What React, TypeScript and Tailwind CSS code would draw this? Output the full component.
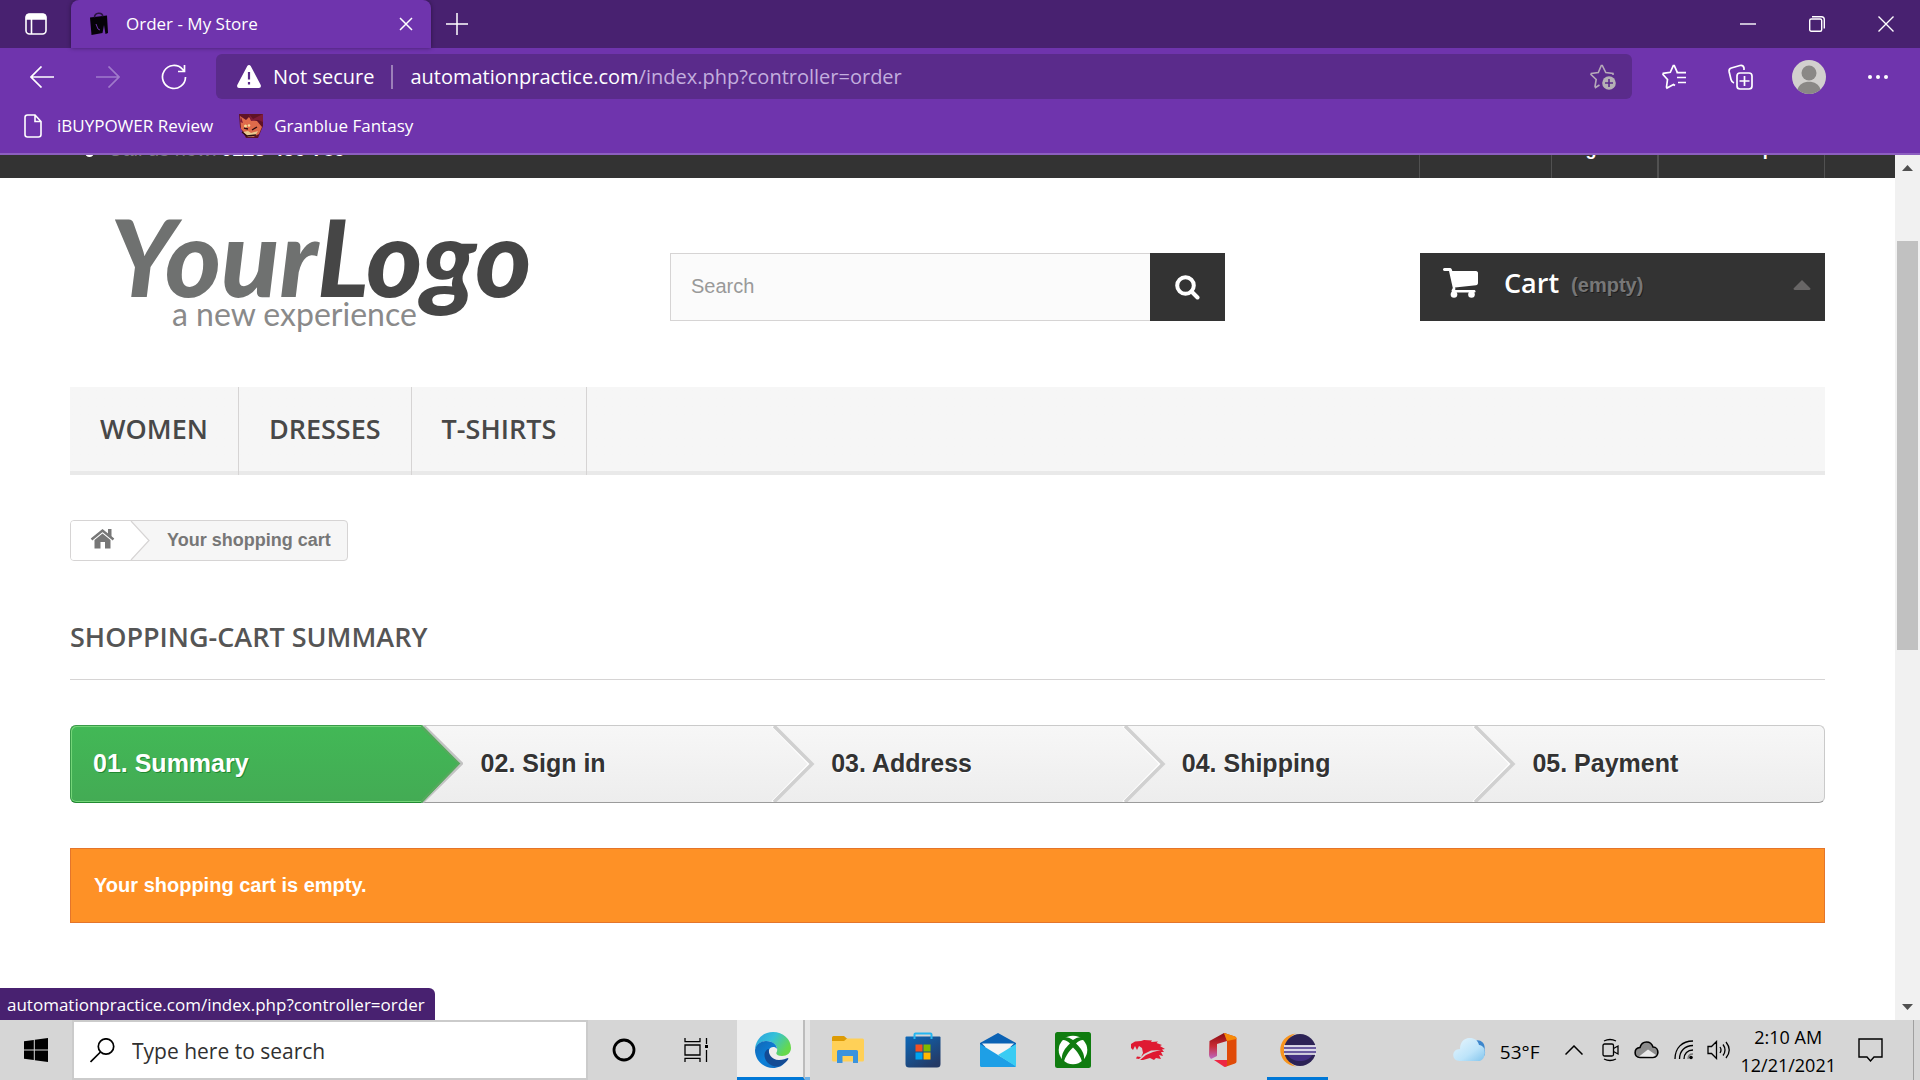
import type { ReactNode } from "react";

const ui = "font-['Open_Sans','Noto_Sans',sans-serif]";

function TitleBar() {
  return (
    <div className="flex h-12 items-stretch bg-[#482170] text-white">
      <button aria-label="Tab actions" className="flex w-[71px] items-center justify-center">
        <svg width="22" height="22" viewBox="0 0 22 22" fill="none" stroke="white" strokeWidth="1.6">
          <rect x="1" y="1" width="20" height="20" rx="3.5" />
          <path d="M1.5 3.5C1.5 2 2 1.500 3.500 1.500H18.500C20 1.500 20.500 2 20.500 3.500V6H1.500Z" fill="white" />
          <path d="M6.500 6V21" />
        </svg>
      </button>
      <div className="flex w-[360px] items-center rounded-t-lg bg-[#6f34ad] pr-[18px] pl-[19px] shadow-[0_0_4px_rgba(0,0,0,0.4)]">
        <svg width="18" height="24" viewBox="0 0 18 24" className="mr-[18px]">
          <path d="M0 5.500L17 3.500L18 21L15.500 22L14 13L12.500 21L1.500 23Z" fill="#050208" />
          <path d="M4.500 5.500C4.500 0 12.500 0 12.800 4.500" fill="none" stroke="#2a1440" strokeWidth="1.600" />
          <path d="M6 12L8 17L10 18" fill="none" stroke="#6f34ad" strokeWidth="1" />
        </svg>
        <span className="flex-1 text-[17px]">Order - My Store</span>
        <button aria-label="Close tab">
          <svg width="14" height="14" viewBox="0 0 14 14" stroke="white" strokeWidth="1.500"><path d="M1 1L13 13M13 1L1 13" /></svg>
        </button>
      </div>
      <button aria-label="New tab" className="flex w-[52px] items-center justify-center">
        <svg width="22" height="22" viewBox="0 0 22 22" stroke="white" strokeWidth="1.500"><path d="M11 0V22M0 11H22" /></svg>
      </button>
      <div className="flex-1" />
      <button aria-label="Minimize" className="flex w-[69px] items-center justify-center">
        <svg width="16" height="16" viewBox="0 0 16 16" stroke="white" strokeWidth="1.400"><path d="M0 8H16" /></svg>
      </button>
      <button aria-label="Restore" className="flex w-[69px] items-center justify-center">
        <svg width="16" height="16" viewBox="0 0 16 16" fill="none" stroke="white" strokeWidth="1.400">
          <rect x="0.700" y="3" width="12" height="12.300" rx="1.500" />
          <path d="M3 0.700H12.500C14.500 0.700 15.300 1.500 15.300 3.500V12.500" />
        </svg>
      </button>
      <button aria-label="Close" className="flex w-[69px] items-center justify-center">
        <svg width="16" height="16" viewBox="0 0 16 16" stroke="white" strokeWidth="1.400"><path d="M0.500 0.500L15.500 15.500M15.500 0.500L0.500 15.500" /></svg>
      </button>
    </div>
  );
}

function AddressRow() {
  return (
    <div className="flex h-14 items-center pt-px text-[20px] text-white">
      <button aria-label="Back" className="ml-[30px]">
        <svg width="24" height="22" viewBox="0 0 24 22" fill="none" stroke="white" strokeWidth="1.700"><path d="M24 11H1M11.500 0.500L1 11L11.500 21.500" /></svg>
      </button>
      <button aria-label="Forward" className="ml-[42px]">
        <svg width="24" height="22" viewBox="0 0 24 22" fill="none" stroke="#a07acb" strokeWidth="1.700"><path d="M0 11H23M12.500 0.500L23 11L12.500 21.500" /></svg>
      </button>
      <button aria-label="Reload" className="ml-[41px]">
        <svg width="26" height="26" viewBox="0 0 26 26" fill="none" stroke="white" strokeWidth="1.700">
          <path d="M24.500 13A11.500 11.500 0 1 1 21.500 5.200L23 7M23.500 1V7.500H17" />
        </svg>
      </button>
      <div className="ml-[29px] flex h-[45px] flex-1 items-center rounded-md bg-[#5a2b8b] pr-[16px] pl-[21px]">
        <svg width="24" height="23" viewBox="0 0 24 23">
          <path d="M10.300 1C11 -0.300 13 -0.300 13.700 1L23.600 19.800C24.400 21.300 23.500 23 22 23H2C0.500 23 -0.400 21.300 0.400 19.800Z" fill="white" />
          <path d="M12 7V14.500M12 17V19.500" stroke="#5a2b8b" strokeWidth="2.200" />
        </svg>
        <span className="ml-3">Not secure</span>
        <span className="mx-[17px] h-6 w-0.5 bg-[#9c80b9]" />
        <span className="flex-1 text-[#c3aede]"><span className="text-white">automationpractice.com</span>/index.php?controller=order</span>
        <button aria-label="Add to favorites">
          <svg width="26" height="26" viewBox="0 0 26 26" fill="none" stroke="#b5a9b9" strokeWidth="1.600">
            <path d="M9.500 21L5.500 23.500L5 22.500L6.200 15.500L1 10.500L1.300 9.500L8.300 8.500L11.300 1.500H12.300L15.800 8.500L23 9.500V11" />
            <circle cx="19" cy="19" r="6.800" fill="#b5b1b5" stroke="none" />
            <path d="M19 15V23M15 19H23" stroke="#5a2b8b" />
          </svg>
        </button>
      </div>
      <button aria-label="Favorites" className="ml-[30px]">
        <svg width="24" height="26" viewBox="0 0 24 26" fill="none" stroke="white" strokeWidth="1.700">
          <path d="M13 21.500L11.500 20.500L5 24L4.500 23L5.500 15.500L1 10.500L1.300 9.300L8.300 8.300L11.300 1.700H12.300L15.300 8.300" />
          <path d="M14.500 8.700H24M15 13.500H24M16 18.500H24" />
        </svg>
      </button>
      <button aria-label="Collections" className="ml-[42px]">
        <svg width="25" height="26" viewBox="0 0 25 26" fill="none" stroke="white" strokeWidth="1.700">
          <path d="M6 19C4.500 18.500 3.500 17.500 3 15.500L1.200 8C0.800 6 1.500 4.500 3.300 4L12 1.500C14 1 15.500 2 16 4V6" />
          <rect x="9" y="9" width="15" height="16" rx="3" />
          <path d="M16.500 12V22M11.500 17H21.500" />
        </svg>
      </button>
      <button aria-label="Profile" className="ml-[39px]">
        <svg width="34" height="34" viewBox="0 0 34 34">
          <circle cx="17" cy="17" r="17" fill="#d2d0ce" />
          <circle cx="17" cy="13" r="7.500" fill="#8a8886" />
          <path d="M5.500 29.500C8 19 26 19 28.500 29.500A17 17 0 0 1 5.500 29.500Z" fill="#8a8886" />
        </svg>
      </button>
      <button aria-label="Settings and more" className="mr-[32px] ml-[42px]">
        <svg width="20" height="6" viewBox="0 0 20 6" fill="white"><circle cx="2" cy="3" r="2" /><circle cx="10" cy="3" r="2" /><circle cx="18" cy="3" r="2" /></svg>
      </button>
    </div>
  );
}

function BookmarkBar() {
  return (
    <div className="flex h-[49px] items-center pb-1.5 pl-6 text-[17px] text-white">
      <a href="#ibuypower" className="flex items-center gap-[15px]">
        <svg width="18" height="24" viewBox="0 0 18 24" fill="none" stroke="white" strokeWidth="1.600">
          <path d="M1 3.500C1 2 2 1 3.500 1H11L17 7.500V20.500C17 22 16 23 14.500 23H3.500C2 23 1 22 1 20.500ZM11 1V7.500H17" />
        </svg>
        iBUYPOWER Review
      </a>
      <a href="#granblue" className="ml-[26px] flex items-center gap-[11px]">
        <svg width="24" height="24" viewBox="0 0 24 24">
          <path d="M0 0H24V12L19 24H7L1 13Z" fill="#5f1226" />
          <path d="M1 2L7 6L10 3L12 6L18 7L23 13L20 20L14 23L7 20L2 15Z" fill="#df6b4b" />
          <path d="M10 0L14 5L24 0V8L19 6L12 7ZM2 3L4 9L1 8Z" fill="#7f1b38" />
          <path d="M4 18L9 17L12 19L19 17L16 22L9 23Z" fill="#e8c98e" />
          <path d="M5 14L9 15M13 16L18 13M3 18L8 22L17 21" stroke="#2c0b10" strokeWidth="1.300" fill="none" />
          <circle cx="6.500" cy="12" r="1.500" fill="#f5dc96" />
          <circle cx="10" cy="11.500" r="1.300" fill="#f5dc96" />
        </svg>
        Granblue Fantasy
      </a>
    </div>
  );
}

function UtilityBar() {
  return (
    <div className="flex h-[23px] items-end overflow-hidden bg-[#333] px-[70px] text-[18px] leading-6 text-white">
      <div className="flex flex-1 items-center pb-[17px] pl-[15px] text-[20px] text-[#777]">
        <span className="mr-[14px] h-4 w-[9px] rounded-full bg-white" />
        Call us now:
        <strong className="ml-[4px] text-white">0123-456-789</strong>
      </div>
      <nav className="flex font-bold">
        <a href="#contact" className="w-[132px] border-l border-[#515151] pb-[15px] text-center text-[#202020]">Contact us</a>
        <a href="#signout" className="w-[106px] border-l border-[#515151] pb-[17px] text-center">Sign out</a>
        <a href="#account" className="w-[168px] border-x border-l-2 border-[#515151] pb-[17px] text-center">Test Samples</a>
      </nav>
    </div>
  );
}

function ShopHeader() {
  return (
    <header className="flex h-[209px] items-start pt-[36px]">
      <a href="#home" className="ml-[40px] block w-[430px] font-['Lato',sans-serif]">
        <span className="block text-[107px] leading-[84px] font-black text-[#6f7170] italic">Your<span className="text-[#464646]">Logo</span></span>
        <span className="-mt-[2px] block pl-[62px] text-[32px] leading-9 text-[#8a8a8a]">a new experience</span>
      </a>
      <form className="mt-[39px] ml-[130px] flex h-[68px] w-[555px]">
        <input aria-label="Search" placeholder="Search" className="min-w-0 flex-1 border border-r-0 border-[#d6d4d4] bg-[#fbfbfb] px-5 pb-0.5 text-[20px] outline-none placeholder:text-[#999]" />
        <button type="button" aria-label="Submit search" className="flex w-[75px] items-center justify-center bg-[#333]">
          <svg width="25" height="25" viewBox="0 0 25 25" fill="none" stroke="white" strokeWidth="4"><circle cx="10.500" cy="10.500" r="8.300" /><path d="M16.500 16.500L22.500 22.500" strokeLinecap="round" /></svg>
        </button>
      </form>
      <a href="#cart" className="mt-[39px] ml-auto flex h-[68px] w-[405px] items-center bg-[#333] pr-[14px] pb-2 pl-[23px]">
        <svg width="35" height="30" viewBox="0 0 35 30" fill="white">
          <path d="M1.500 0H7C8.500 0 9 1.500 9.300 3H33C34.300 3 35 4 35 5V15C35 16.200 34.300 17 33 17.200L12 19.500C12.500 20.500 12.500 21.500 12 22H31C33 22 33 24.500 31.500 24.500H10.500C8.800 24.500 8 23 9 21.500L9.800 20L6 3H1.500C-0.500 3 -0.500 0 1.500 0Z" />
          <circle cx="11" cy="26.500" r="3.300" /><circle cx="28.500" cy="26.500" r="3.300" />
        </svg>
        <span className="ml-[26px] font-['Open_Sans',sans-serif] text-[27px] font-semibold text-white">Cart</span>
        <span className="mt-1 ml-3 text-[20px] font-bold text-[#777] [text-shadow:1px_1px_rgba(0,0,0,0.4)]">(empty)</span>
        <svg width="18" height="10" viewBox="0 0 18 10" className="mt-1 ml-auto"><path d="M9 0L17.500 8.500Q17.500 10 16 10H2Q0.500 10 0.500 8.500Z" fill="#686666" /></svg>
      </a>
    </header>
  );
}

function MainMenu() {
  return (
    <nav className="flex h-[88px] bg-linear-to-t from-[#e9e9e9] from-[4px] to-[#f6f6f6] to-[4px] font-['Open_Sans',sans-serif] text-[27px] font-semibold text-[#484848]">
      {["WOMEN", "DRESSES", "T-SHIRTS"].map((t) => (
        <a key={t} href="#category" className="flex items-center border-r border-[#d6d4d4] px-[30px] pb-1">{t}</a>
      ))}
    </nav>
  );
}

function Breadcrumb() {
  return (
    <nav aria-label="Breadcrumb" className="mt-[45px] flex h-[41px] w-fit items-stretch overflow-hidden rounded border border-[#d6d4d4] bg-[#f6f6f6] pr-4 text-[18px] font-bold text-[#777]">
      <a href="#home" aria-label="Home" className="flex">
        <svg width="80" height="39" viewBox="0 0 80 39">
          <path d="M0 0H60L78 19.500L60 39H0Z" fill="white" />
          <path d="M60 0L78 19.500L60 39" fill="none" stroke="#d6d4d4" strokeWidth="1.200" />
          <path d="M20.500 18.500L31.500 9.500L42.500 18.500" fill="none" stroke="#777" strokeWidth="2.400" />
          <path d="M37 8H40.500V16L37 13.500ZM23.500 19L31.500 12.500L39.500 19V27.500H34V21H29.500V27.500H23.500Z" fill="#777" />
        </svg>
      </a>
      <span className="flex items-center pl-4">Your shopping cart</span>
    </nav>
  );
}

function Steps() {
  const steps = ["02. Sign in", "03. Address", "04. Shipping", "05. Payment"];
  return (
    <ol className="mt-[45px] flex h-[78px] rounded-md border border-[#cacaca] border-b-[#9b9b9b] bg-linear-to-b from-[#f7f7f7] to-[#ededed] text-[25px] font-bold text-[#333] [text-shadow:1px_1px_white]">
      <li className="relative -my-px -ml-px flex w-1/5 items-center rounded-l-md border border-r-0 border-[#399b49] border-b-[#208931] bg-linear-to-b from-[#42b856] to-[#43ab54] pl-[22px] text-white shadow-[inset_1px_1px_#74d578,inset_0_-1px_#74d578] [text-shadow:1px_1px_#208931]">
        01. Summary
        <svg width="42" height="78" viewBox="0 0 42 78" className="absolute -top-px left-full">
          <defs><linearGradient id="step" x2="0" y2="1"><stop stopColor="#42b856" /><stop offset="1" stopColor="#43ab54" /></linearGradient></defs>
          <path d="M3 1L41 38.500L2 77" fill="none" stroke="#c2c2c2" strokeWidth="2.500" />
          <path d="M0 0H1L38.500 38.500L1 78H0Z" fill="url(#step)" />
          <path d="M0 1L38 38.500L0 77" fill="none" stroke="#57a95e" strokeWidth="2" />
        </svg>
      </li>
      {steps.map((s, i) => (
        <li key={s} className="relative flex w-1/5 items-center pl-[60px]">
          {s}
          {i < 3 && (
            <svg width="44" height="76" viewBox="0 0 44 76" className="absolute top-0 left-full">
              <path d="M1 0L38 38L1 76" fill="none" stroke="white" strokeWidth="2" />
              <path d="M3 0L41 38L3 76" fill="none" stroke="#d0d0d0" strokeWidth="3.500" />
            </svg>
          )}
        </li>
      ))}
    </ol>
  );
}

function TaskSlot({ label, children }: { label: string; children: ReactNode }) {
  return <button aria-label={label} className="flex h-full w-[75px] items-center justify-center">{children}</button>;
}

function Taskbar() {
  return (
    <footer className="flex h-[60px] items-stretch bg-[#d6d6d6] text-black">
      <button aria-label="Start" className="flex w-[72px] items-center justify-center">
        <svg width="24" height="24" viewBox="0 0 24 24"><path d="M0 3.300L9.800 2V11.400H0ZM10.800 1.800L24 0V11.400H10.800ZM0 12.500H9.800V22L0 20.700ZM10.800 12.500H24V24L10.800 22.200Z" /></svg>
      </button>
      <label className="flex w-[516px] items-center border-2 border-[#cbcbcb] bg-white pl-4">
        <svg width="25" height="25" viewBox="0 0 25 25" fill="none" stroke="black" strokeWidth="1.700"><circle cx="16" cy="8.500" r="7.700" /><path d="M10.500 14L0.500 24" /></svg>
        <input aria-label="Type here to search" placeholder="Type here to search" className="ml-[17px] min-w-0 flex-1 pt-1 text-[21px] outline-none placeholder:text-[#303030]" />
      </label>
      <button aria-label="Cortana" className="flex w-[72px] items-center justify-center">
        <svg width="24" height="24" viewBox="0 0 24 24"><circle cx="12" cy="12" r="10" fill="none" stroke="black" strokeWidth="2.800" /></svg>
      </button>
      <button aria-label="Task view" className="mr-[5px] flex w-[72px] items-center justify-center">
        <svg width="25" height="24" viewBox="0 0 25 24" fill="none" stroke="black" strokeWidth="1.300">
          <path d="M1 0V3.700H16V0M1 24V20.300H16V24M1 7H16V17H1ZM22.500 0V6M22.500 12V24" /><path d="M21 7H24V10H21Z" fill="black" stroke="none" />
        </svg>
      </button>
      <button aria-label="Microsoft Edge" className="flex w-[73px] items-stretch">
        <span className="flex w-[68px] items-center justify-end border-r-2 border-b-[3px] border-[#bcbcbc] border-b-[#0078d7] bg-[#eee] pt-[3px] pr-3">
          <svg width="36" height="36" viewBox="0 0 36 36">
            <defs>
              <linearGradient id="e1" x1="0" x2="1" y2="0.500"><stop stopColor="#2a9fe0" /><stop offset="0.500" stopColor="#35c1d8" /><stop offset="1" stopColor="#66d94a" /></linearGradient>
              <linearGradient id="e2" x2="1" y2="1"><stop stopColor="#1266b5" /><stop offset="0.500" stopColor="#0b80d8" /><stop offset="1" stopColor="#1565b8" /></linearGradient>
            </defs>
            <path d="M0 17C1 7 8 0 18 0C28 0 36 7 36 16C36 21 32 24 27 24C23 24 20.500 22.500 21.500 20.500C24 16 20 9 11 9C6 9 2 12 0 17Z" fill="url(#e1)" />
            <path d="M0 18C1 12 6 9 11 9C18 9 22 13 22 17C20 14 15 14.500 14 18C12 25 19 31 27 30L31 29C28 34 23 36 18 36C8 36 0 28 0 18Z" fill="url(#e2)" />
            <path d="M14 17C13 21 16 28 24 28C28 28 31 26.500 33 26C35 26.500 29 33 23 34.500C15 35 9 29 9.500 22C10 19 12 17 14 17Z" fill="#134b94" />
          </svg>
        </span>
        <span className="w-[5px] border-b-[3px] border-[#6cb0e6] bg-[#e6e6e6]" />
      </button>
      <TaskSlot label="File Explorer">
        <svg width="32" height="28" viewBox="0 0 32 28">
          <path d="M0 1.500Q0 0 1.500 0H12L15.500 3H0Z M0 3H15V6H0Z" fill="#dd9b05" />
          <path d="M0 5H12L15 2.500H30.500Q32 2.500 32 4V24Q32 25.500 30.500 25.500H1.500Q0 25.500 0 24Z" fill="#ffd057" />
          <path d="M5 27V15.500Q5 14 6.500 14H24.500Q26 14 26 15.500V27H21V20H10.500V27Z" fill="#3a93dd" />
        </svg>
      </TaskSlot>
      <TaskSlot label="Microsoft Store">
        <svg width="36" height="36" viewBox="0 0 36 36">
          <defs><linearGradient id="st" x2="0.700" y2="1"><stop stopColor="#0d68b8" /><stop offset="1" stopColor="#243a66" /></linearGradient></defs>
          <path d="M0.500 5.500Q0.500 4.500 1.500 4.500H34.500Q35.500 4.500 35.500 5.500V32Q35.500 35.500 32 35.500H4Q0.500 35.500 0.500 32Z" fill="url(#st)" />
          <path d="M9.500 7V2.500Q9.500 1.500 10.500 1.500H25.500Q26.500 1.500 26.500 2.500V7" fill="none" stroke="#25b6f0" strokeWidth="2" />
          <path d="M10.500 12.500H17.500V19.500H10.500Z" fill="#f25022" /><path d="M18.500 12.500H25.500V19.500H18.500Z" fill="#7fba00" /><path d="M10.500 20.500H17.500V27.500H10.500Z" fill="#00a4ef" /><path d="M18.500 20.500H25.500V27.500H18.500Z" fill="#ffb900" />
        </svg>
      </TaskSlot>
      <TaskSlot label="Mail">
        <svg width="36" height="34" viewBox="0 0 36 34">
          <path d="M0 10L18 0L36 10V14H0Z" fill="#0b62b4" /><path d="M2 10.500H34L20 24H15Z" fill="#f4f4f4" />
          <path d="M0 11L36 33Q36 34 34.500 34H1.500Q0 34 0 32.500Z" fill="#1e9fe6" /><path d="M36 11L18 22L36 33.500Z" fill="#3accf3" />
        </svg>
      </TaskSlot>
      <TaskSlot label="Xbox">
        <svg width="36" height="36" viewBox="0 0 36 36">
          <rect width="36" height="36" rx="2.500" fill="#107c10" /><circle cx="18" cy="18" r="14.300" fill="white" />
          <path d="M9 5.500C12 4.500 15 6 18 8C21 6 24 4.500 27 5.500L29 8C26 7.500 23.500 9 21 11.500C26 16 30 22 29 28L27 30C26 25 22 19 18 15.500C14 19 10 25 9 30L7 28C6 22 10 16 15 11.500C12.500 9 10 7.500 7 8Z" fill="#107c10" />
        </svg>
      </TaskSlot>
      <TaskSlot label="iBUYPOWER">
        <svg width="34" height="20" viewBox="0 0 34 20" fill="#df1a32">
          <path d="M0 4L4 1.500L10 1L13 0L21 0.500L20 2L27 1.500L25.500 3L31 5L29 6L34 9L31 9.500L33 12L30 12L32 16L28 15L30 19L25 18L23 20L19 18L12 20H9L15 15L22 12L30 10L20 10.500L13 14L8 19L5 18.500L6 16.500L10 17L12 13L11 8L8 6L6 10L4 6L2 10L0 8Z" />
        </svg>
      </TaskSlot>
      <TaskSlot label="Office">
        <svg width="28" height="34" viewBox="0 0 28 34">
          <defs><linearGradient id="of" x2="0" y2="1"><stop stopColor="#8a0d12" /><stop offset="0.500" stopColor="#c92a35" /><stop offset="1" stopColor="#bc6ac5" /></linearGradient></defs>
          <path d="M0.500 8L15 0L18 1V8L8 11V23L2 26Q0 24 0 22Z" fill="url(#of)" />
          <path d="M15 0L26 3.500Q27.500 4 27.500 5.500V28.500Q27.500 30 26 30.500L16 34L18 27V8Z" fill="#e04a08" /><path d="M15 0L26 3.500Q27.500 4 27.500 6L18 8Z" fill="#f78a09" />
          <path d="M5 27H18V33L15.500 34Z" fill="#ed2743" />
        </svg>
      </TaskSlot>
      <button aria-label="Eclipse" className="ml-[7px] flex w-[61px] items-center justify-center border-b-[3px] border-[#0078d7] pt-[3px]">
        <svg width="36" height="34" viewBox="0 0 36 34">
          <path d="M16 0.500C-5 3-5 31 16 33.500C2 27 2 7 16 0.500Z" fill="#f7941e" />
          <circle cx="20" cy="17" r="16" fill="#2c2255" />
          <path d="M8 22H32C28 30 12 30 8 22Z" fill="#443082" /><path d="M4 16.500H36" stroke="#6b5ca0" strokeWidth="8" />
          <path d="M4 13H36M4 17H36M4 21H36" stroke="white" strokeWidth="1.700" />
        </svg>
      </button>
      <div className="flex-1" />
      <div className="flex items-center">
        <button className="flex items-center text-[19px]">
          <svg width="33" height="24" viewBox="0 0 33 24" className="mr-[14px]">
            <defs><linearGradient id="cl" x2="1" y2="1"><stop stopColor="#eaf6fd" /><stop offset="0.600" stopColor="#bde4fa" /><stop offset="1" stopColor="#82c4ec" /></linearGradient></defs>
            <path d="M20 5C24-1 33 4 31.500 11C34 20 28 20 22 20Z" fill="#3d86cc" />
            <path d="M7 23C-2 23-2 11 7 11C7-3 24-3 26 7C34 7 34 23 25 23Z" fill="url(#cl)" />
          </svg>
          <span className="pt-1">53°F</span>
        </button>
        <button aria-label="Show hidden icons" className="ml-[26px]">
          <svg width="18" height="10" viewBox="0 0 18 10" fill="none" stroke="black" strokeWidth="1.500"><path d="M0.500 9.500L9 1L17.500 9.500" /></svg>
        </button>
        <svg width="17" height="24" viewBox="0 0 17 24" className="ml-[19px]" fill="none" stroke="black" strokeWidth="1.300"><path d="M2 3Q8 0 14 3M2 21Q8 24 14 21" /><rect x="1" y="6" width="10.500" height="12" rx="1.500" /><path d="M11.500 10.500L16 8V16L11.500 13.500" /></svg>
        <svg width="25" height="18" viewBox="0 0 25 18" className="ml-[15px]" stroke="black" strokeWidth="1.600">
          <path d="M6 16.500C-0.500 16.500-0.500 7 6 6.500C8-1 17-0.500 19 6C25.500 6 25.500 16.500 19 16.500Z" fill="#8c8c8c" /><path d="M5 15.500L14 8.500L22 14L19 15.700Z" fill="#e8e8e8" stroke="none" />
        </svg>
        <svg width="20" height="20" viewBox="0 0 20 20" className="ml-[15px]" fill="none" stroke="black" strokeWidth="1.300"><path d="M1 19C1 8 8 1 19 1M5.500 19C5.500 11 11 5.500 19 5.500M10 19C10 13.500 13.500 10 19 10" /><path d="M14 19C14 16 16 14 19 14" stroke="#777" /><circle cx="17" cy="17.500" r="1.800" fill="black" stroke="none" /></svg>
        <svg width="24" height="20" viewBox="0 0 24 20" className="ml-[13px]" fill="none" stroke="black" strokeWidth="1.300"><path d="M1 6.500H4.500L9.500 1.500V18.500L4.500 13.500H1ZM13 7Q15 10 13 13M16 4.500Q20 10 16 15.500M19 2Q25.500 10 19 18" /></svg>
        <div className="ml-[9px] flex flex-col items-center pt-px text-[18px] leading-7"><span>2:10 AM</span><span>12/21/2021</span></div>
        <button aria-label="Notifications" className="ml-[22px]">
          <svg width="25" height="24" viewBox="0 0 25 24" fill="none" stroke="black" strokeWidth="1.400"><path d="M1 1H24V19H16L12.500 23L9 19H1Z" /></svg>
        </button>
        <span className="mr-[6px] ml-[30px] h-[60px] w-px bg-[#a0a0a0]" />
      </div>
    </footer>
  );
}

export default function App() {
  return (
    <div className={`flex h-screen flex-col overflow-hidden bg-white ${ui}`}>
      <div className="border-b-2 border-[#8d5fc0] bg-[#6f34ad]">
        <TitleBar />
        <AddressRow />
        <BookmarkBar />
      </div>
      <div className="relative flex min-h-0 flex-1">
        <main className="flex-1 font-['Liberation_Sans',Arial,sans-serif]">
          <UtilityBar />
          <div className="px-[70px]">
            <ShopHeader />
            <MainMenu />
            <Breadcrumb />
            <h1 className="mt-[52px] border-b border-[#d6d4d4] pb-[18px] font-['Open_Sans',sans-serif] text-[27px] leading-12 font-semibold text-[#555]">SHOPPING-CART SUMMARY</h1>
            <Steps />
            <p className="mt-[45px] flex h-[75px] items-center border border-[#e4752b] bg-[#fe9126] px-[23px] pb-0.5 text-[20px] font-bold text-white">Your shopping cart is empty.</p>
          </div>
        </main>
        <div className="flex w-[25px] flex-col items-center bg-[#f1f1f1] py-[10px]">
          <svg width="11" height="6" viewBox="0 0 11 6" fill="#505050"><path d="M5.500 0L11 6H0Z" /></svg>
          <div className="mt-[70px] h-[409px] w-[21px] bg-[#c1c1c1]" />
          <svg width="11" height="6" viewBox="0 0 11 6" fill="#505050" className="mt-auto"><path d="M0 0H11L5.500 6Z" /></svg>
        </div>
        <div className="absolute bottom-0 left-0 flex h-8 items-center rounded-tr-md bg-[#482170] pt-px pr-[10px] pl-[7px] text-[17px] text-white">automationpractice.com/index.php?controller=order</div>
      </div>
      <Taskbar />
    </div>
  );
}
